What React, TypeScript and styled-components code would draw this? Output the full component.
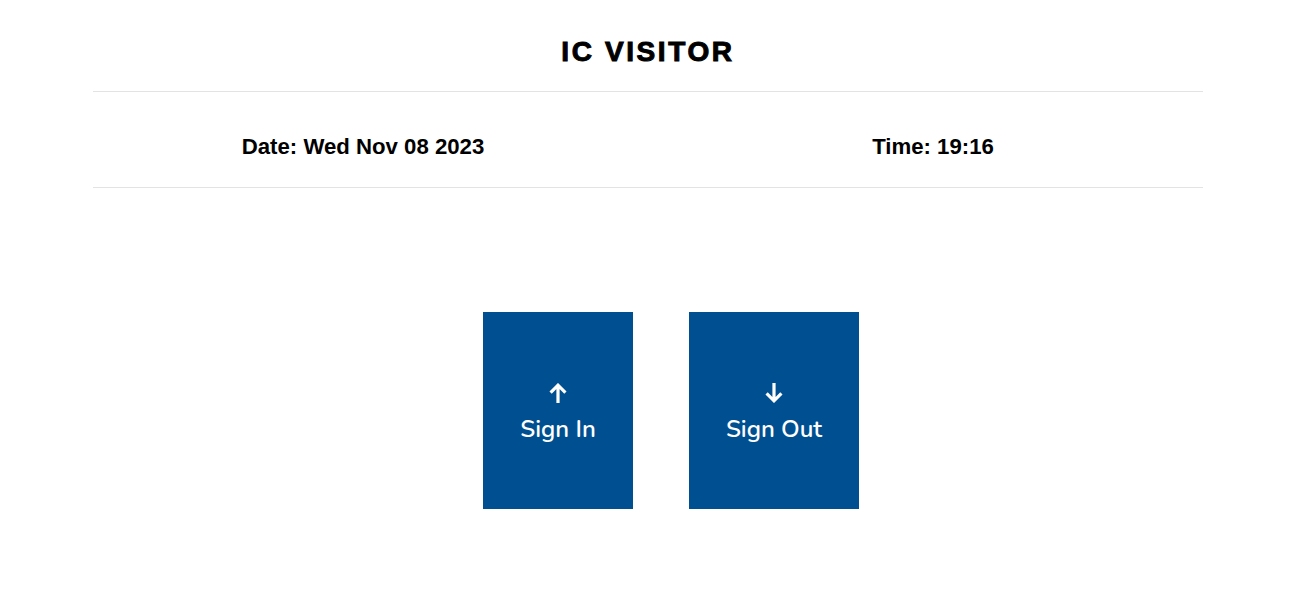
import React from "react";
import styled, { createGlobalStyle } from "styled-components";

const GlobalStyle = createGlobalStyle`
  html, body { margin: 0; padding: 0; background: #fff; }
  body { font-family: "Liberation Sans", Arial, sans-serif; color: #000; }
`;

const Page = styled.div`
  width: 1296px;
  display: flex;
  flex-direction: column;
  align-items: center;
`;

const Container = styled.div`
  width: 1110px;
  display: flex;
  flex-direction: column;
`;

const Title = styled.h1`
  margin: 0;
  padding: 36px 0 24px;
  text-align: center;
  font-family: "Liberation Sans", Arial, sans-serif;
  font-weight: 700;
  font-size: 28px;
  line-height: 31px;
  letter-spacing: 2.6px;
  -webkit-text-stroke: 1px #000;
`;

const Rule = styled.hr`
  margin: 0;
  border: 0;
  border-top: 1px solid #e3e3e3;
  width: 100%;
`;

const InfoRow = styled.div`
  display: grid;
  grid-template-columns: 1fr 1fr;
  margin: 0 -15px;
  height: 95px;
  align-items: center;
`;

const InfoCell = styled.div`
  text-align: center;
  padding: 14px 15px 0;
  font-weight: 700;
  font-size: 22.2px;
  line-height: 26px;
`;

const Actions = styled.div`
  display: flex;
  justify-content: center;
  gap: 56px;
  padding-left: 46px;
  margin-top: 124px;
`;

const ActionButton = styled.button<{ $w: number }>`
  width: ${(p) => p.$w}px;
  height: 197px;
  background: #005091;
  color: #fff;
  border: 0;
  border-radius: 0;
  display: flex;
  flex-direction: column;
  align-items: center;
  justify-content: center;
  gap: 13px;
  padding: 4px 0 0;
  font-family: "Nunito", "Lato", "Open Sans", sans-serif;
  font-weight: 600;
  font-size: 24px;
  line-height: 26px;
  cursor: pointer;
`;

const Arrow = ({ down }: { down?: boolean }) => (
  <svg
    width="20"
    height="20"
    viewBox="0 0 20 20"
    style={{ transform: down ? "rotate(180deg)" : undefined }}
  >
    <path
      d="M2.6 9.6 L10 2.2 L17.4 9.6 M10 2.2 V20"
      fill="none"
      stroke="#fff"
      strokeWidth="3.2"
      strokeLinecap="butt"
      strokeLinejoin="miter"
    />
  </svg>
);

export default function App() {
  return (
    <>
      <GlobalStyle />
      <Page>
        <Container>
          <Title>IC VISITOR</Title>
          <Rule />
          <InfoRow>
            <InfoCell>Date: Wed Nov 08 2023</InfoCell>
            <InfoCell>Time: 19:16</InfoCell>
          </InfoRow>
          <Rule />
        </Container>
        <Actions>
          <ActionButton $w={150}>
            <Arrow />
            <span>Sign In</span>
          </ActionButton>
          <ActionButton $w={170}>
            <Arrow down />
            <span>Sign Out</span>
          </ActionButton>
        </Actions>
      </Page>
    </>
  );
}
